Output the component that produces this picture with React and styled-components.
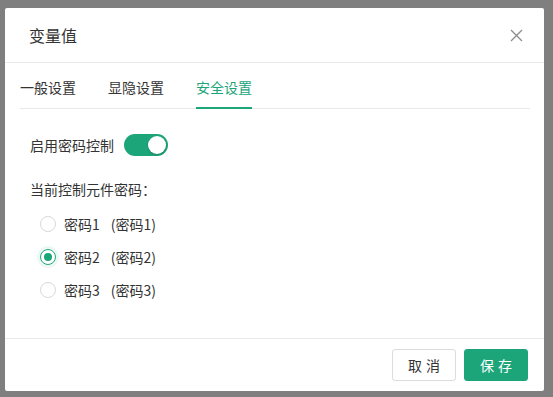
import React, { useState } from "react";
import styled, { createGlobalStyle } from "styled-components";

const GREEN = "#1da57a";

const Global = createGlobalStyle`
  html, body { margin: 0; padding: 0; }
  body {
    background: #7f7f7f;
    font-family: "Noto Sans CJK SC", "Noto Sans", sans-serif;
    font-size: 14px;
    color: #333;
  }
`;

const Page = styled.div`
  width: 553px;
  height: 397px;
  padding: 8px 0 0 5px;
  box-sizing: border-box;
`;

const Dialog = styled.div`
  width: 539px;
  height: 383px;
  background: #fff;
  border-radius: 2px;
  display: flex;
  flex-direction: column;
  box-sizing: border-box;
`;

const Header = styled.div`
  height: 55px;
  box-sizing: border-box;
  border-bottom: 1px solid #e9e9e9;
  display: flex;
  align-items: center;
  justify-content: space-between;
  padding: 0 21px 0 24px;
`;

const Title = styled.div`
  font-size: 16px;
  color: #333;
  line-height: 22px;
`;

const CloseBtn = styled.button`
  border: 0;
  background: none;
  padding: 0;
  width: 14px;
  height: 14px;
  display: flex;
  align-items: center;
  justify-content: center;
  cursor: pointer;
`;

const TabBar = styled.div`
  display: flex;
  gap: 32px;
  margin: 0 14px 0 15px;
  border-bottom: 1px solid #e9e9e9;
`;

const Tab = styled.div`
  position: relative;
  padding: 13px 0 10px;
  line-height: 22px;
  font-size: 14px;
  color: ${(p) => (p.$active ? GREEN : "#333")};
  cursor: pointer;
  &::after {
    content: "";
    display: ${(p) => (p.$active ? "block" : "none")};
    position: absolute;
    left: 0;
    right: 0;
    bottom: -1px;
    height: 2px;
    background: ${GREEN};
  }
`;

const Content = styled.div`
  flex: 1;
  padding: 25px 25px 0;
  display: flex;
  flex-direction: column;
`;

const SwitchRow = styled.div`
  display: flex;
  align-items: center;
  gap: 10px;
  line-height: 22px;
`;

const Switch = styled.button`
  position: relative;
  width: 44px;
  height: 22px;
  border-radius: 11px;
  border: 0;
  padding: 0;
  background: ${(p) => (p.$on ? GREEN : "#bfbfbf")};
  cursor: pointer;
  &::after {
    content: "";
    position: absolute;
    top: 2px;
    left: ${(p) => (p.$on ? "24px" : "2px")};
    width: 18px;
    height: 18px;
    border-radius: 50%;
    background: #fff;
    box-shadow: 0 1px 2px rgba(0, 0, 0, 0.2);
  }
`;

const Label = styled.div`
  margin-top: 22px;
  line-height: 22px;
  color: #333;
`;

const RadioGroup = styled.div`
  display: flex;
  flex-direction: column;
  gap: 11px;
  margin-top: 13px;
  padding-left: 10px;
`;

const RadioRow = styled.label`
  display: flex;
  align-items: center;
  line-height: 22px;
  cursor: pointer;
  color: #333;
`;

const RadioDot = styled.span`
  position: relative;
  width: 16px;
  height: 16px;
  box-sizing: border-box;
  border-radius: 50%;
  border: 1px solid ${(p) => (p.$checked ? GREEN : "#d9d9d9")};
  margin-right: 8px;
  box-shadow: ${(p) => (p.$checked ? "0 0 0 3px rgba(29,165,122,0.08)" : "none")};
  &::after {
    content: "";
    display: ${(p) => (p.$checked ? "block" : "none")};
    position: absolute;
    left: 3px;
    top: 3px;
    width: 8px;
    height: 8px;
    border-radius: 50%;
    background: ${GREEN};
  }
`;

const Sub = styled.span`
  margin-left: 11px;
`;

const Footer = styled.div`
  border-top: 1px solid #e9e9e9;
  padding: 10px 16px 10px;
  display: flex;
  justify-content: flex-end;
  gap: 8px;
`;

const Button = styled.button`
  width: 64px;
  height: 32px;
  border-radius: 3px;
  font-family: inherit;
  font-size: 14px;
  letter-spacing: 4px;
  text-indent: 4px;
  cursor: pointer;
  border: 1px solid ${(p) => (p.$primary ? GREEN : "#dcdcdc")};
  background: ${(p) => (p.$primary ? GREEN : "#fff")};
  color: ${(p) => (p.$primary ? "#fff" : "#333")};
  padding: 0;
`;

const tabs = ["一般设置", "显隐设置", "安全设置"];
const options = [
  ["密码1", "(密码1)"],
  ["密码2", "(密码2)"],
  ["密码3", "(密码3)"],
];

export default function App() {
  const [tab, setTab] = useState(2);
  const [on, setOn] = useState(true);
  const [sel, setSel] = useState(1);
  return (
    <>
      <Global />
      <Page>
        <Dialog>
          <Header>
            <Title>变量值</Title>
            <CloseBtn aria-label="close">
              <svg width="13" height="13" viewBox="0 0 13 13">
                <path d="M1 1 L12 12 M12 1 L1 12" stroke="#8c8c8c" strokeWidth="1.3" />
              </svg>
            </CloseBtn>
          </Header>
          <TabBar>
            {tabs.map((t, i) => (
              <Tab key={t} $active={i === tab} onClick={() => setTab(i)}>
                {t}
              </Tab>
            ))}
          </TabBar>
          <Content>
            <SwitchRow>
              启用密码控制
              <Switch $on={on} onClick={() => setOn(!on)} />
            </SwitchRow>
            <Label>当前控制元件密码：</Label>
            <RadioGroup>
              {options.map(([a, b], i) => (
                <RadioRow key={a} onClick={() => setSel(i)}>
                  <RadioDot $checked={sel === i} />
                  {a}
                  <Sub>{b}</Sub>
                </RadioRow>
              ))}
            </RadioGroup>
          </Content>
          <Footer>
            <Button>取消</Button>
            <Button $primary>保存</Button>
          </Footer>
        </Dialog>
      </Page>
    </>
  );
}
